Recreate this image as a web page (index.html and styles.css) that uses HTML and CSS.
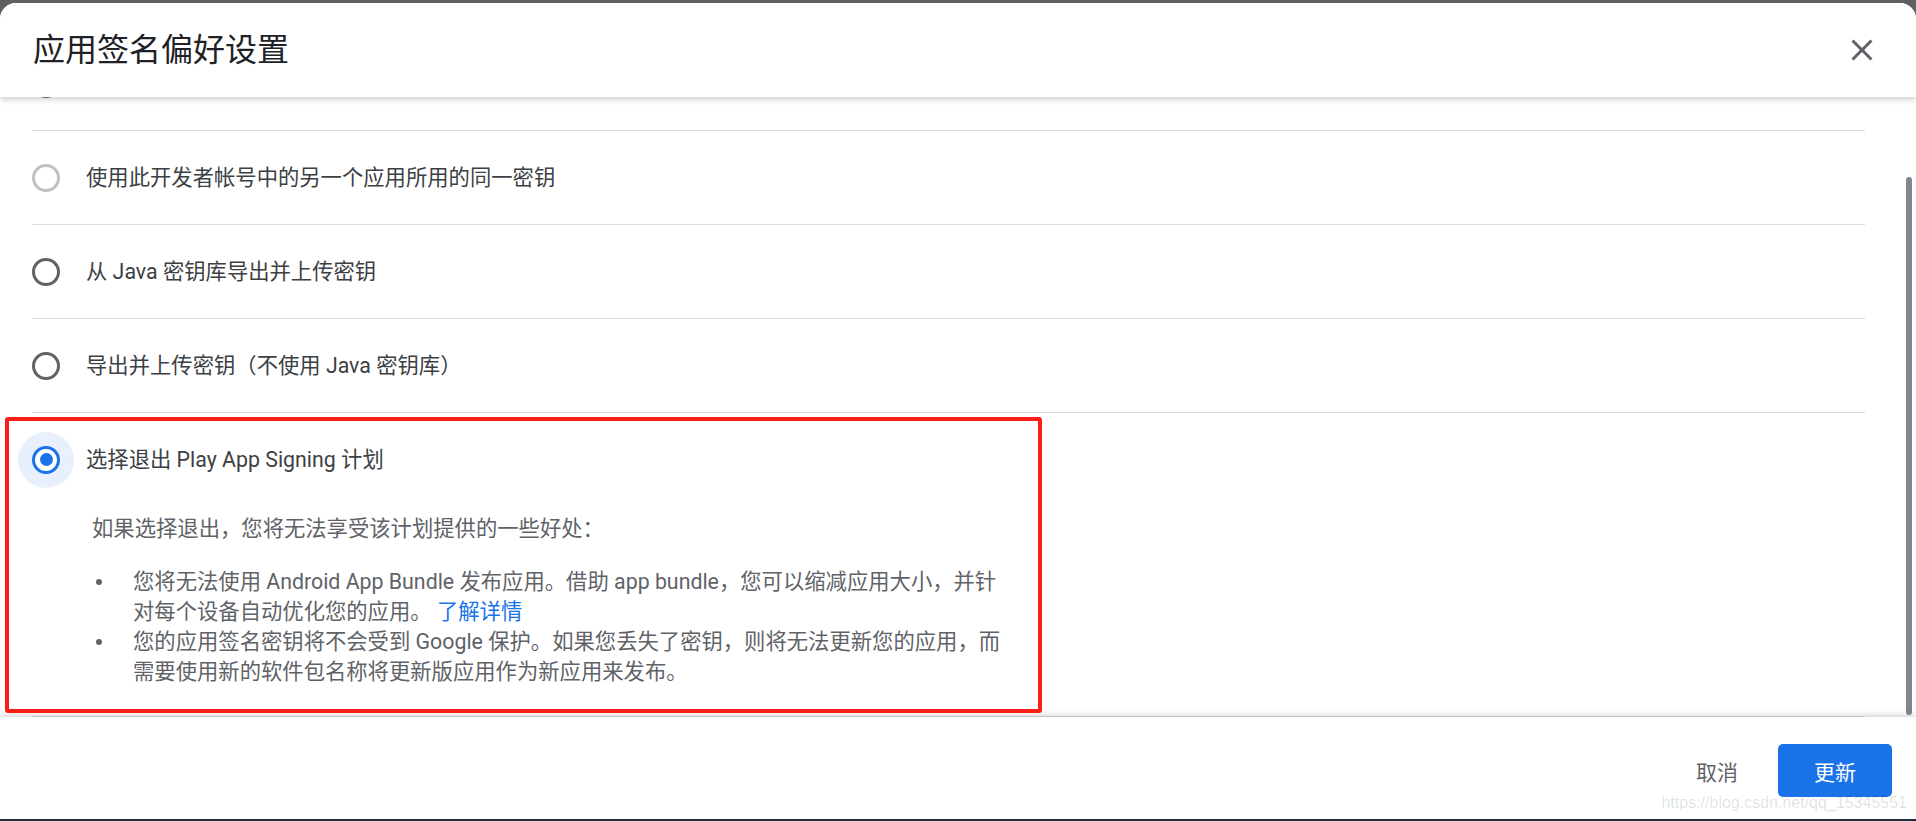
FILE: index.html
```html
<!DOCTYPE html>
<html lang="zh-CN">

<head>
    <meta charset="UTF-8">
    <meta name="viewport" content="width=device-width, initial-scale=1.0">
    <title>应用签名偏好设置</title>
    <link rel="stylesheet" href="styles.css">
</head>

<body>
    <div class="dialog">
        <div class="dialog-header">
            <h1 class="dialog-title">应用签名偏好设置</h1>
            <button class="btn-close" aria-label="关闭">
                <svg viewBox="0 0 24 24" width="36" height="36">
                    <path fill="#5f6368" d="M19 6.41L17.59 5 12 10.59 6.41 5 5 6.41 10.59 12 5 17.59 6.41 19 12 13.41 17.59 19 19 17.59 13.41 12z"/>
                </svg>
            </button>
        </div>

        <div class="dialog-body">
            <ul class="options">
                <li class="option">
                    <div class="option-head">
                        <span class="radio"></span>
                        <span class="label">让 Google 管理并保护您的应用签名密钥（推荐）</span>
                    </div>
                </li>
                <li class="option">
                    <div class="option-head">
                        <span class="radio radio-disabled"></span>
                        <span class="label">使用此开发者帐号中的另一个应用所用的同一密钥</span>
                    </div>
                </li>
                <li class="option">
                    <div class="option-head">
                        <span class="radio"></span>
                        <span class="label">从 Java 密钥库导出并上传密钥</span>
                    </div>
                </li>
                <li class="option">
                    <div class="option-head">
                        <span class="radio"></span>
                        <span class="label">导出并上传密钥（不使用 Java 密钥库）</span>
                    </div>
                </li>
                <li class="option option-open">
                    <div class="option-head">
                        <span class="radio radio-checked"></span>
                        <span class="label">选择退出 Play App Signing 计划</span>
                    </div>
                    <div class="option-detail">
                        <p>如果选择退出，您将无法享受该计划提供的一些好处：</p>
                        <ul class="benefits">
                            <li>您将无法使用 Android App Bundle 发布应用。借助 app bundle，您可以缩减应用大小，并针对每个设备自动优化您的应用。 <a href="#" class="link">了解详情</a></li>
                            <li>您的应用签名密钥将不会受到 Google 保护。如果您丢失了密钥，则将无法更新您的应用，而需要使用新的软件包名称将更新版应用作为新应用来发布。</li>
                        </ul>
                    </div>
                </li>
            </ul>
            <div class="scroll-thumb"></div>
        </div>

        <div class="dialog-footer">
            <button class="btn btn-text">取消</button>
            <button class="btn btn-primary">更新</button>
        </div>

        <div class="highlight"></div>
        <div class="watermark">https://blog.csdn.net/qq_15345551</div>
    </div>
    <div class="taskbar"></div>
</body>

</html>
```

FILE: styles.css
```css
* {
    margin: 0;
    padding: 0;
    box-sizing: border-box;
    list-style: none
}

html,
body {
    height: 100%;
}

body {
    display: flex;
    flex-direction: column;
    padding-top: 3px;
    background: #5f6062;
    font-family: Roboto, "Noto Sans CJK SC", sans-serif;
    overflow: hidden;
}

.dialog {
    flex: 1;
    display: flex;
    flex-direction: column;
    position: relative;
    background: #fff;
    border-radius: 16px 16px 0 0;
    overflow: hidden;
}

.dialog-header {
    height: 94px;
    flex: none;
    display: flex;
    align-items: center;
    justify-content: space-between;
    padding: 0 36px 0 33px;
    position: relative;
    z-index: 2;
    background: #fff;
    box-shadow: 0 2px 6px rgba(60, 64, 67, 0.28);
}

.dialog-title {
    font-size: 32px;
    font-weight: 400;
    line-height: 40px;
    color: #202124;
}

.btn-close {
    width: 36px;
    height: 36px;
    border: none;
    background: none;
    display: flex;
}

.dialog-body {
    flex: 1;
    position: relative;
    overflow: hidden;
    padding: 0 51px 0 32px;
}

.options {
    margin-top: -60px;
}

.option {
    border-bottom: 1px solid #dadce0;
}

.option-head {
    height: 93px;
    display: flex;
    align-items: center;
    gap: 26px;
}

.radio {
    width: 28px;
    height: 28px;
    flex: none;
    border: 3px solid #5f6368;
    border-radius: 50%;
    position: relative;
}

.radio-disabled {
    border-color: #bdc1c6;
}

.radio-checked {
    border-color: #1a73e8;
    box-shadow: 0 0 0 14px #e8f0fe;
}

.radio-checked::after {
    content: "";
    position: absolute;
    left: 50%;
    top: 50%;
    width: 13px;
    height: 13px;
    margin: -6.5px 0 0 -6.5px;
    border-radius: 50%;
    background: #1a73e8;
}

.label {
    font-size: 21.33px;
    line-height: 30px;
    color: #3c4043;
}

.option-detail {
    padding: 8px 0 29px 60px;
}

.option-detail p {
    font-size: 21.33px;
    line-height: 30px;
    color: #5f6368;
}

.benefits {
    width: 913px;
    margin-top: 23px;
    padding-left: 41px;
}

.benefits li {
    position: relative;
    font-size: 21.33px;
    line-height: 30px;
    color: #5f6368;
}

.benefits li::before {
    content: "";
    position: absolute;
    left: -37px;
    top: 12px;
    width: 6px;
    height: 6px;
    border-radius: 50%;
    background: #5f6368;
}

.link {
    color: #1a73e8;
    text-decoration: none;
}

.scroll-thumb {
    position: absolute;
    right: 4px;
    top: 80px;
    width: 6px;
    height: 538px;
    border-radius: 3px;
    background: #80868b;
}

.dialog-footer {
    height: 102px;
    flex: none;
    display: flex;
    align-items: center;
    justify-content: flex-end;
    gap: 18px;
    padding: 5px 24px 0 0;
    position: relative;
    z-index: 2;
    background: #fff;
    box-shadow: 0 -2px 6px rgba(60, 64, 67, 0.22);
}

.btn {
    height: 53px;
    border: none;
    border-radius: 5px;
    font-family: inherit;
    font-size: 21px;
    background: none;
}

.btn-text {
    padding: 0 22px;
    color: #5f6368;
}

.btn-primary {
    width: 114px;
    background: #1a73e8;
    color: #fff;
}

/* 截图上的红框标注 */
.highlight {
    position: absolute;
    left: 5px;
    top: 414px;
    width: 1037px;
    height: 296px;
    border: 4px solid #fa1e16;
    border-radius: 3px;
    z-index: 3;
}

.watermark {
    position: absolute;
    right: 9px;
    bottom: 6px;
    font-family: "Liberation Sans", Arial, sans-serif;
    font-size: 16px;
    line-height: 20px;
    color: rgba(0, 0, 0, 0.13);
    z-index: 3;
}

.taskbar {
    height: 2px;
    flex: none;
    background: #1f2b36;
}
```
